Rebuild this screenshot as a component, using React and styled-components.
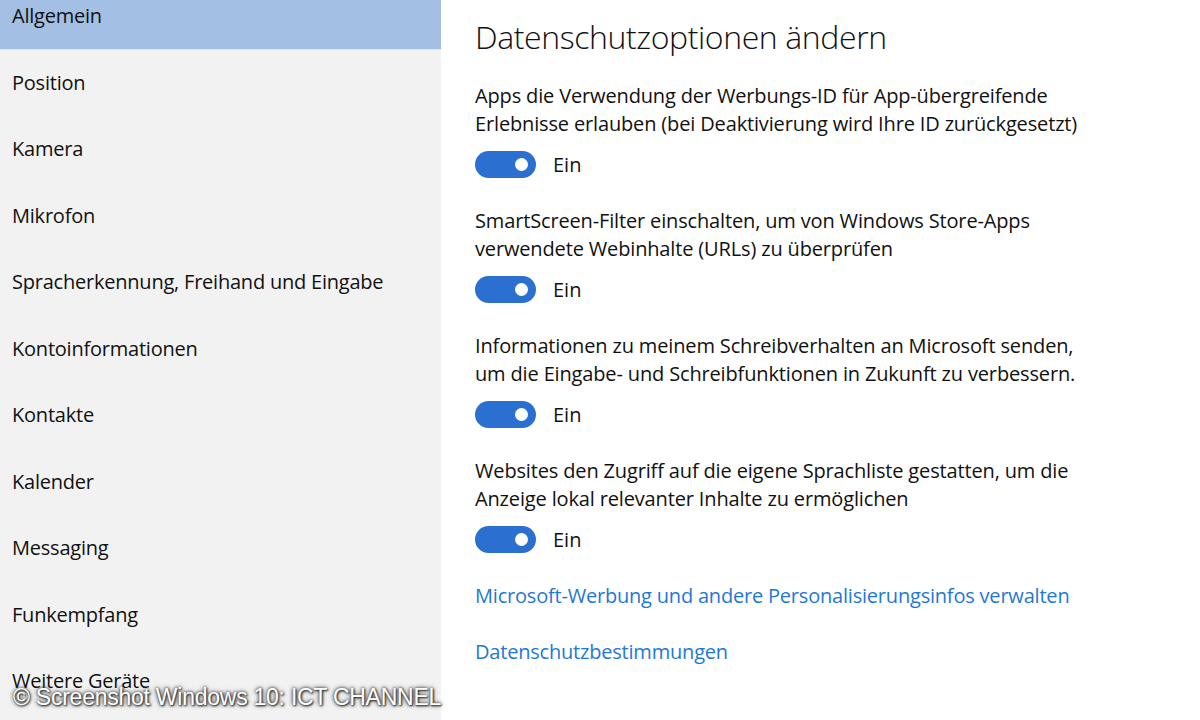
import styled, { createGlobalStyle } from "styled-components";

const GlobalStyle = createGlobalStyle`
  html, body {
    margin: 0;
    padding: 0;
    background: #ffffff;
  }
  body {
    font-family: "Open Sans", "Noto Sans", sans-serif;
    color: #000;
    overflow: hidden;
  }
`;

const navItems = [
  "Allgemein",
  "Position",
  "Kamera",
  "Mikrofon",
  "Spracherkennung, Freihand und Eingabe",
  "Kontoinformationen",
  "Kontakte",
  "Kalender",
  "Messaging",
  "Funkempfang",
  "Weitere Geräte",
];

const options = [
  [
    "Apps die Verwendung der Werbungs-ID für App-übergreifende",
    "Erlebnisse erlauben (bei Deaktivierung wird Ihre ID zurückgesetzt)",
  ],
  [
    "SmartScreen-Filter einschalten, um von Windows Store-Apps",
    "verwendete Webinhalte (URLs) zu überprüfen",
  ],
  [
    "Informationen zu meinem Schreibverhalten an Microsoft senden,",
    "um die Eingabe- und Schreibfunktionen in Zukunft zu verbessern.",
  ],
  [
    "Websites den Zugriff auf die eigene Sprachliste gestatten, um die",
    "Anzeige lokal relevanter Inhalte zu ermöglichen",
  ],
];

const Page = styled.div`
  position: relative;
  display: flex;
  width: 1200px;
  height: 720px;
  overflow: hidden;
`;

const Sidebar = styled.nav`
  width: 441px;
  flex-shrink: 0;
  background: #f2f2f2;
  display: flex;
  flex-direction: column;
  margin-top: -17px;
`;

const NavItem = styled.div`
  height: 66.5px;
  flex-shrink: 0;
  display: flex;
  align-items: center;
  padding-left: 12px;
  font-size: 20px;
  letter-spacing: -0.22px;
  color: #111;
  background: ${(p) => (p.$active ? "#a3bfe4" : "transparent")};
  border-bottom: ${(p) => (p.$active ? "1px solid #dfe6ef" : "1px solid transparent")};
  box-sizing: border-box;
`;

const Main = styled.main`
  flex: 1;
  padding: 17px 0 0 34px;
  display: flex;
  flex-direction: column;
`;

const Heading = styled.h1`
  margin: 0 0 25px;
  font-size: 32px;
  line-height: 40px;
  font-weight: 300;
  letter-spacing: -0.4px;
  color: #111;
`;

const Option = styled.section`
  display: flex;
  flex-direction: column;
  margin-bottom: 29px;
`;

const Label = styled.p`
  margin: 0 0 13px;
  font-size: 20px;
  line-height: 28px;
  letter-spacing: -0.15px;
  color: #111;
`;

const ToggleRow = styled.div`
  display: flex;
  align-items: center;
  gap: 17px;
  height: 27px;
`;

const Switch = styled.div`
  width: 61px;
  height: 27px;
  border-radius: 14px;
  background: #2b6fd0;
  display: flex;
  align-items: center;
  justify-content: flex-end;
  padding-right: 8px;
  box-sizing: border-box;
`;

const Knob = styled.span`
  width: 13px;
  height: 13px;
  border-radius: 50%;
  background: #fff;
`;

const State = styled.span`
  font-size: 20px;
  color: #111;
`;

const Link = styled.a`
  font-size: 20px;
  line-height: 28px;
  letter-spacing: -0.2px;
  color: #1f78d6;
  text-decoration: none;
  margin-bottom: 28px;
`;

const Watermark = styled.div`
  position: absolute;
  left: 13px;
  bottom: 9px;
  font-family: "Liberation Sans", Arial, sans-serif;
  font-size: 23px;
  color: #fff;
  letter-spacing: -0.25px;
  text-shadow: 0 0 3px #333, 0 0 5px #555, 1px 1px 2px #222;
`;

export default function App() {
  return (
    <>
      <GlobalStyle />
      <Page>
        <Sidebar>
          {navItems.map((item, i) => (
            <NavItem key={item} $active={i === 0}>
              {item}
            </NavItem>
          ))}
        </Sidebar>
        <Main>
          <Heading>Datenschutzoptionen ändern</Heading>
          {options.map((lines) => (
            <Option key={lines[0]}>
              <Label>
                {lines[0]}
                <br />
                {lines[1]}
              </Label>
              <ToggleRow>
                <Switch>
                  <Knob />
                </Switch>
                <State>Ein</State>
              </ToggleRow>
            </Option>
          ))}
          <Link href="#">Microsoft-Werbung und andere Personalisierungsinfos verwalten</Link>
          <Link href="#">Datenschutzbestimmungen</Link>
        </Main>
        <Watermark>© Screenshot Windows 10: ICT CHANNEL</Watermark>
      </Page>
    </>
  );
}
